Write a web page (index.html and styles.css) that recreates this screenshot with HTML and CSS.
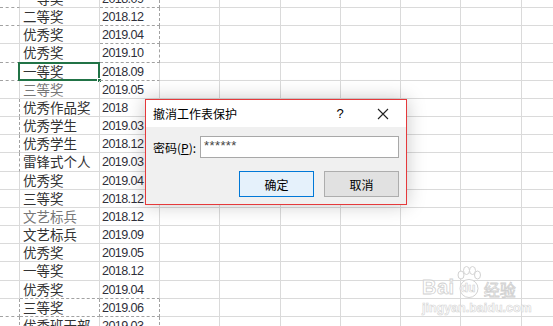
FILE: index.html
```html
<!DOCTYPE html>
<html lang="zh-CN">
<head>
    <meta charset="UTF-8">
    <meta name="viewport" content="width=device-width, initial-scale=1.0">
    <title>撤消工作表保护</title>
    <link rel="stylesheet" href="styles.css">
</head>
<body>
    <div class="sheet">
        <div class="row"><div class="cell c0 dash-b"></div><div class="cell c1">一等奖</div><div class="cell c2 num dash-rb">2018.09</div><div class="cell cx"></div><div class="cell cx"></div><div class="cell cx"></div><div class="cell cx"></div><div class="cell cx"></div><div class="cell cx"></div><div class="cell cx"></div></div>
        <div class="row"><div class="cell c0 dash-b"></div><div class="cell c1">二等奖</div><div class="cell c2 num dash-rb">2018.12</div><div class="cell cx"></div><div class="cell cx"></div><div class="cell cx"></div><div class="cell cx"></div><div class="cell cx"></div><div class="cell cx"></div><div class="cell cx"></div></div>
        <div class="row"><div class="cell c0"></div><div class="cell c1">优秀奖</div><div class="cell c2 num dash-rb">2019.04</div><div class="cell cx"></div><div class="cell cx"></div><div class="cell cx"></div><div class="cell cx"></div><div class="cell cx"></div><div class="cell cx"></div><div class="cell cx"></div></div>
        <div class="row"><div class="cell c0 dash-b"></div><div class="cell c1 dash-b">优秀奖</div><div class="cell c2 num dash-rb">2019.10</div><div class="cell cx"></div><div class="cell cx"></div><div class="cell cx"></div><div class="cell cx"></div><div class="cell cx"></div><div class="cell cx"></div><div class="cell cx"></div></div>
        <div class="row"><div class="cell c0 dash-b"></div><div class="cell c1 selected">一等奖</div><div class="cell c2 num dash-b">2018.09</div><div class="cell cx"></div><div class="cell cx"></div><div class="cell cx"></div><div class="cell cx"></div><div class="cell cx"></div><div class="cell cx"></div><div class="cell cx"></div></div>
        <div class="row"><div class="cell c0"></div><div class="cell c1 faint">三等奖</div><div class="cell c2 num">2019.05</div><div class="cell cx"></div><div class="cell cx"></div><div class="cell cx"></div><div class="cell cx"></div><div class="cell cx"></div><div class="cell cx"></div><div class="cell cx"></div></div>
        <div class="row"><div class="cell c0 dash-r"></div><div class="cell c1">优秀作品奖</div><div class="cell c2 num">2018</div><div class="cell cx"></div><div class="cell cx"></div><div class="cell cx"></div><div class="cell cx"></div><div class="cell cx"></div><div class="cell cx"></div><div class="cell cx"></div></div>
        <div class="row"><div class="cell c0 dash-r"></div><div class="cell c1">优秀学生</div><div class="cell c2 num">2019.03</div><div class="cell cx"></div><div class="cell cx"></div><div class="cell cx"></div><div class="cell cx"></div><div class="cell cx"></div><div class="cell cx"></div><div class="cell cx"></div></div>
        <div class="row"><div class="cell c0 dash-r"></div><div class="cell c1">优秀学生</div><div class="cell c2 num">2018.12</div><div class="cell cx"></div><div class="cell cx"></div><div class="cell cx"></div><div class="cell cx"></div><div class="cell cx"></div><div class="cell cx"></div><div class="cell cx"></div></div>
        <div class="row"><div class="cell c0 dash-r"></div><div class="cell c1">雷锋式个人</div><div class="cell c2 num">2019.03</div><div class="cell cx"></div><div class="cell cx"></div><div class="cell cx"></div><div class="cell cx"></div><div class="cell cx"></div><div class="cell cx"></div><div class="cell cx"></div></div>
        <div class="row"><div class="cell c0"></div><div class="cell c1">优秀奖</div><div class="cell c2 num">2019.04</div><div class="cell cx"></div><div class="cell cx"></div><div class="cell cx"></div><div class="cell cx"></div><div class="cell cx"></div><div class="cell cx"></div><div class="cell cx"></div></div>
        <div class="row"><div class="cell c0"></div><div class="cell c1">三等奖</div><div class="cell c2 num">2018.12</div><div class="cell cx"></div><div class="cell cx"></div><div class="cell cx"></div><div class="cell cx"></div><div class="cell cx"></div><div class="cell cx"></div><div class="cell cx"></div></div>
        <div class="row"><div class="cell c0"></div><div class="cell c1 faint">文艺标兵</div><div class="cell c2 num">2018.12</div><div class="cell cx"></div><div class="cell cx"></div><div class="cell cx"></div><div class="cell cx"></div><div class="cell cx"></div><div class="cell cx"></div><div class="cell cx"></div></div>
        <div class="row"><div class="cell c0"></div><div class="cell c1">文艺标兵</div><div class="cell c2 num">2019.09</div><div class="cell cx"></div><div class="cell cx"></div><div class="cell cx"></div><div class="cell cx"></div><div class="cell cx"></div><div class="cell cx"></div><div class="cell cx"></div></div>
        <div class="row"><div class="cell c0"></div><div class="cell c1">优秀奖</div><div class="cell c2 num">2019.05</div><div class="cell cx"></div><div class="cell cx"></div><div class="cell cx"></div><div class="cell cx"></div><div class="cell cx"></div><div class="cell cx"></div><div class="cell cx"></div></div>
        <div class="row"><div class="cell c0"></div><div class="cell c1">一等奖</div><div class="cell c2 num">2018.12</div><div class="cell cx"></div><div class="cell cx"></div><div class="cell cx"></div><div class="cell cx"></div><div class="cell cx"></div><div class="cell cx"></div><div class="cell cx"></div></div>
        <div class="row"><div class="cell c0"></div><div class="cell c1 dash-b">优秀奖</div><div class="cell c2 num dash-b">2019.04</div><div class="cell cx"></div><div class="cell cx"></div><div class="cell cx"></div><div class="cell cx"></div><div class="cell cx"></div><div class="cell cx"></div><div class="cell cx"></div></div>
        <div class="row"><div class="cell c0 dash-rb"></div><div class="cell c1 dash-rb">三等奖</div><div class="cell c2 num dash-rb">2019.06</div><div class="cell cx"></div><div class="cell cx"></div><div class="cell cx"></div><div class="cell cx"></div><div class="cell cx"></div><div class="cell cx"></div><div class="cell cx"></div></div>
        <div class="row"><div class="cell c0 dash-r"></div><div class="cell c1">优秀班干部</div><div class="cell c2 num dash-r">2019.03</div><div class="cell cx"></div><div class="cell cx"></div><div class="cell cx"></div><div class="cell cx"></div><div class="cell cx"></div><div class="cell cx"></div><div class="cell cx"></div></div>
    </div>

    <div class="dialog">
        <div class="title-bar">
            <span class="title">撤消工作表保护</span>
            <span class="help">?</span>
            <span class="close">
                <svg width="12" height="12" viewBox="0 0 12 12"><path d="M1 1L11 11M11 1L1 11" stroke="#222" stroke-width="1.1" fill="none"/></svg>
            </span>
        </div>
        <div class="dialog-body">
            <div class="field">
                <label class="field-label">密码(<u>P</u>):</label>
                <div class="input">******</div>
            </div>
            <div class="actions">
                <button class="btn btn-primary">确定</button>
                <button class="btn">取消</button>
            </div>
        </div>
    </div>

    <!-- watermark -->
    <div class="watermark">
        <div class="wm-top">
            <span class="wm-bai">Bai</span>
            <span class="wm-paw">
                <svg width="28" height="32" viewBox="0 0 28 32">
                    <g fill="#fff" stroke="#d2d2d2" stroke-width="1">
                        <ellipse cx="6" cy="9" rx="3" ry="4"/>
                        <ellipse cx="11.5" cy="4.5" rx="3" ry="4"/>
                        <ellipse cx="17.5" cy="4.5" rx="3" ry="4"/>
                        <ellipse cx="22.5" cy="9" rx="3" ry="4"/>
                        <circle cx="14" cy="22.5" r="9"/>
                    </g>
                </svg>
                <span class="wm-du">du</span>
            </span>
            <span class="wm-cn">经验</span>
        </div>
        <div class="wm-url">jingyan.baidu.com</div>
    </div>
</body>
</html>
```
FILE: styles.css
```css
body {
    margin: 0;
    width: 553px;
    height: 326px;
    overflow: hidden;
    background-color: #fff;
    font-family: "Noto Sans CJK SC", "Liberation Sans", sans-serif;
    position: relative;
}
.sheet {
    margin-top: -10px;
}
.row {
    display: flex;
    height: 18.17px;
}
.cell {
    box-sizing: border-box;
    flex: none;
    height: 100%;
    border-right: 1px solid #dadada;
    border-bottom: 1px solid #dadada;
    font-size: 13.5px;
    line-height: 17px;
    color: #333;
    padding-left: 3px;
    white-space: nowrap;
    overflow: hidden;
    position: relative;
}
.c0 { width: 20px; }
.c1 { width: 80px; }
.c2 { width: 60px; }
.cx { width: 60.3px; }
.num {
    font-family: "Liberation Sans", sans-serif;
    font-size: 12.6px;
    letter-spacing: -0.6px;
    color: #2f2f3a;
    padding-left: 2px;
    line-height: 18px;
}
.faint {
    color: #777;
}
.dash-b {
    border-bottom: 1px dashed #a2a2a2;
}
.dash-r {
    border-right: 1px dashed #a2a2a2;
}
.dash-rb {
    border-right: 1px dashed #a2a2a2;
    border-bottom: 1px dashed #a2a2a2;
}
.selected {
    overflow: visible;
}
.selected::before {
    content: "";
    position: absolute;
    left: -2px;
    top: -1px;
    right: -1px;
    bottom: -1px;
    border: 2px solid #217346;
}
.selected::after {
    content: "";
    position: absolute;
    right: -3px;
    bottom: -3px;
    width: 5px;
    height: 5px;
    background-color: #217346;
    border: 1px solid #fff;
    box-sizing: border-box;
}

/* dialog */
.dialog {
    position: absolute;
    left: 145px;
    top: 99px;
    width: 262px;
    height: 106px;
    box-sizing: border-box;
    border: 1px solid #e5393b;
    background-color: #f0f0f0;
    box-shadow: 0 0 18px rgba(0,0,0,0.22);
    font-size: 12px;
    color: #000;
}
.title-bar {
    display: flex;
    align-items: center;
    height: 27px;
    background-color: #fff;
    padding: 0 8px 0 7px;
}
.title {
    flex: 1;
    font-size: 12px;
}
.help {
    width: 20px;
    text-align: center;
    font-family: "Liberation Sans", sans-serif;
    font-size: 13px;
    margin-right: 18px;
}
.close {
    width: 30px;
    display: flex;
    justify-content: center;
}
.dialog-body {
    padding: 9px 7px 0 7px;
}
.field {
    display: flex;
    align-items: center;
}
.field-label {
    width: 47px;
    font-size: 12px;
}
.field-label u {
    text-decoration-thickness: 1px;
}
.input {
    box-sizing: border-box;
    width: 199px;
    height: 22px;
    border: 1px solid #a8a8a8;
    background-color: #fff;
    padding-left: 3px;
    font-family: "Liberation Sans", sans-serif;
    font-size: 13px;
    letter-spacing: 0.4px;
    line-height: 17px;
    color: #444;
}
.actions {
    display: flex;
    justify-content: flex-end;
    gap: 10px;
    margin-top: 13px;
}
.btn {
    box-sizing: border-box;
    width: 75px;
    height: 26px;
    border: 1px solid #adadad;
    background-color: #e1e1e1;
    font-family: "Noto Sans CJK SC", sans-serif;
    font-size: 12px;
    color: #000;
    padding: 0;
}
.btn-primary {
    border-color: #0078d7;
    background-color: #e5f1fb;
}

/* watermark */
.watermark {
    position: absolute;
    left: 422px;
    top: 265px;
    width: 102px;
}
.wm-top {
    display: flex;
    align-items: flex-end;
    height: 33px;
}
.wm-bai {
    font-family: "Liberation Sans", sans-serif;
    font-weight: bold;
    font-size: 20px;
    line-height: 20px;
    color: #fff;
    -webkit-text-stroke: 0.8px #d0d0d0;
    letter-spacing: 0.5px;
    margin-bottom: 1px;
}
.wm-paw {
    position: relative;
    width: 28px;
    height: 32px;
}
.wm-paw svg {
    display: block;
}
.wm-du {
    position: absolute;
    left: 6px;
    top: 15px;
    font-family: "Liberation Sans", sans-serif;
    font-weight: bold;
    font-size: 12px;
    color: #fff;
    -webkit-text-stroke: 0.6px #d0d0d0;
}
.wm-cn {
    font-size: 16px;
    line-height: 18px;
    color: #fff;
    -webkit-text-stroke: 0.8px #d0d0d0;
    margin-left: 1px;
}
.wm-url {
    font-family: "Liberation Sans", sans-serif;
    font-weight: bold;
    font-size: 12.5px;
    line-height: 14px;
    margin-top: 3px;
    color: #fff;
    -webkit-text-stroke: 0.6px #d4d4d4;
}
```
